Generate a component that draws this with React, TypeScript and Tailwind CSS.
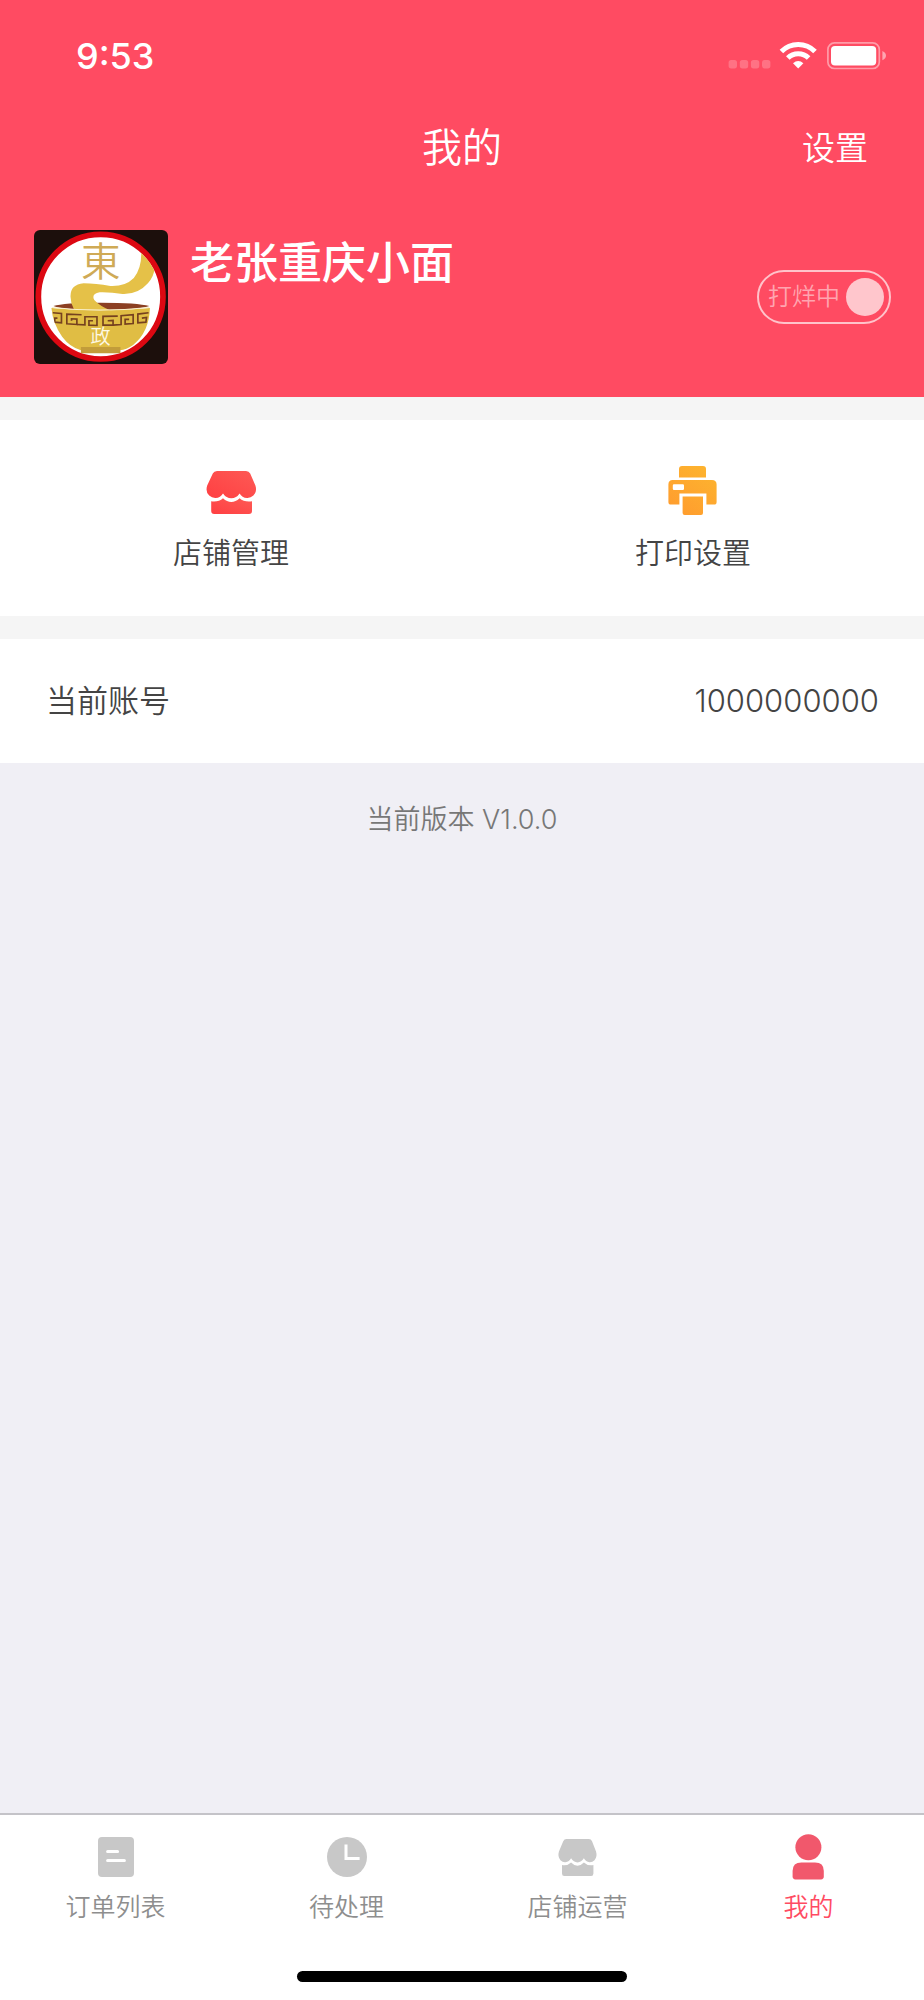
import { useState } from "react";
import type { ReactNode } from "react";

const FONT = "font-['Inter','Noto_Sans_CJK_SC',sans-serif]";

function StatusIcons() {
  return (
    <svg className="h-[28px] w-[158px]" viewBox="0 0 158 28" fill="none" aria-hidden="true">
      <g fill="#fff" fillOpacity="0.22">
        <rect x="0.6" y="18" width="8.4" height="8.4" rx="2.6" />
        <rect x="11.8" y="18" width="8.4" height="8.4" rx="2.6" />
        <rect x="22.9" y="18" width="8.4" height="8.4" rx="2.6" />
        <rect x="34" y="18" width="8.4" height="8.4" rx="2.6" />
      </g>
      <g stroke="#fff" strokeWidth="5">
        <path d="M53.4 9.6 A23.5 23.5 0 0 1 87 9.6" />
        <path d="M59.8 16 A14.6 14.6 0 0 1 80.6 16" />
      </g>
      <path d="M70.2 26.4 L65 21.2 Q70.2 16.8 75.4 21.2 Z" fill="#fff" />
      <rect x="99.9" y="0.9" width="51.4" height="25.6" rx="6.6" stroke="#fff" strokeOpacity="0.45" strokeWidth="1.7" />
      <rect x="103" y="4" width="45.2" height="19.4" rx="4" fill="#fff" />
      <path d="M154.4 9 Q158 10.6 158 13.6 Q158 16.6 154.4 18.2 Z" fill="#fff" fillOpacity="0.5" />
    </svg>
  );
}

function ShopLogo() {
  return (
    <svg
      className="size-[134px] shrink-0 rounded-md"
      viewBox="42 45 400 400"
      role="img"
      aria-label="店铺头像"
    >
      <defs>
        <clipPath id="logo-disc">
          <circle cx="241" cy="244" r="178" />
        </clipPath>
        <clipPath id="logo-bowl">
          <path d="M94 278 Q240 292 388 278 Q386 350 338 388 Q318 402 298 404 L182 404 Q150 396 126 364 Q98 324 94 278 Z" />
        </clipPath>
      </defs>
      <rect x="42" y="45" width="400" height="400" fill="#1c0f0c" />
      <circle cx="241" cy="244" r="186" fill="#fff" stroke="#dc0812" strokeWidth="17" />
      <g clipPath="url(#logo-disc)">
        <path d="M100 272 Q130 262 240 262 Q352 262 386 272 Q352 284 240 284 Q130 284 100 272 Z" fill="#8b3f22" />
        <path
          d="M362 110 Q364 158 340 188 Q314 214 270 212 Q226 204 190 204 Q150 208 151 244 Q151 264 162 284 L272 286 Q238 272 222 254 Q212 236 238 231 Q270 230 306 236 Q352 238 382 204 Q400 184 402 160 L380 110 Z"
          fill="#e5c148"
        />
      </g>
      <path
        d="M94 278 Q240 292 388 278 Q386 350 338 388 Q318 402 298 404 L182 404 Q150 396 126 364 Q98 324 94 278 Z"
        fill="#e0bd44"
      />
      <path d="M96 276 Q240 291 386 276" fill="none" stroke="#faf0cc" strokeWidth="3" />
      <path d="M182 394 L300 394 L300 413 L182 413 Z" fill="#c29c3a" />
      <g clipPath="url(#logo-bowl)" fill="none" stroke="#75411f" strokeWidth="5">
        <path d="M98 292 L124 294 L124 322 L104 320 L104 308 L112 308" />
        <path d="M184 298 L140 296 L140 325 L170 327 L170 311 L154 310 L154 316" />
        <path d="M170 327 L194 328 L194 304 L230 304 L230 330 L206 329 L206 316 L218 316" />
        <path d="M292 302 L248 303 L248 329 L278 329 L278 315 L262 316" />
        <path d="M278 329 L302 327 L302 301 L338 298 L338 324 L314 326 L314 312 L326 312" />
        <path d="M384 292 L352 296 L352 322 L376 320 L378 306 L364 308" />
      </g>
      <text
        x="241"
        y="183"
        textAnchor="middle"
        fontSize="118"
        fontWeight="350"
        fill="#cfaa56"
        className="font-['Noto_Sans_CJK_TC',sans-serif]"
      >
        東
      </text>
      <text
        x="241"
        y="386"
        textAnchor="middle"
        fontSize="60"
        fontWeight="350"
        fill="#fdf8e4"
        className="font-['Noto_Sans_CJK_TC',sans-serif]"
      >
        政
      </text>
    </svg>
  );
}

function StoreShape({ fill }: { fill: string }) {
  return (
    <g fill={fill}>
      <path d="M11 0 H40 Q43 0 44.2 2.6 L49.4 14.6 Q51.4 20.6 47.4 24.6 Q44.6 27.2 41 27 Q36 26.6 33.6 22.4 Q30.4 27.2 25.3 27.2 Q20.2 27.2 17 22.4 Q14.6 26.6 9.6 27 Q6 27.2 3.2 24.6 Q-0.8 20.6 1.2 14.6 L6.8 2.6 Q8 0 11 0 Z" />
      <path d="M5.2 30.2 Q12.6 31.2 17 27.2 Q21 31 25.3 31 Q29.6 31 33.6 27.2 Q38 31.2 46 30.2 V40 Q46 43 43 43 H8.2 Q5.2 43 5.2 40 Z" />
    </g>
  );
}

function StoreIcon() {
  return (
    <svg className="h-[45px] w-[51px]" viewBox="0 -2 51 45" aria-hidden="true">
      <defs>
        <linearGradient id="store-red" x1="0" y1="1" x2="1" y2="0">
          <stop offset="0" stopColor="#ff3f42" />
          <stop offset="1" stopColor="#fd5a55" />
        </linearGradient>
      </defs>
      <StoreShape fill="url(#store-red)" />
    </svg>
  );
}

function PrinterIcon() {
  return (
    <svg className="h-[51px] w-[51px]" viewBox="0 0 51 51" aria-hidden="true">
      <defs>
        <linearGradient id="printer-orange" gradientUnits="userSpaceOnUse" x1="44" y1="0" x2="10" y2="49">
          <stop offset="0" stopColor="#fdb52f" />
          <stop offset="1" stopColor="#ff9c2e" />
        </linearGradient>
      </defs>
      <g fill="url(#printer-orange)">
        <path d="M11 11.4 V3 Q11 0 14 0 H35 Q38 0 38 3 V11.4 Z" />
        <path
          fillRule="evenodd"
          d="M4.6 14 H44 Q48.6 14 48.6 18.6 V36 Q48.6 38.6 46 38.6 H38.4 V27.4 H11.4 V38.6 H3 Q0.4 38.6 0.4 36 V18.6 Q0.4 14 4.6 14 Z M6 18.2 Q4.8 18.2 4.8 19.4 V22.8 Q4.8 24 6 24 H14.8 Q16 24 16 22.8 V19.4 Q16 18.2 14.8 18.2 Z"
        />
        <path d="M14.6 30.6 H35 V47 Q35 49 33 49 H16.6 Q14.6 49 14.6 47 Z" />
      </g>
    </svg>
  );
}

function ListIcon() {
  return (
    <svg className="h-[46px] w-[48px]" viewBox="0 0 48 46" aria-hidden="true">
      <rect x="6" y="3" width="36" height="40" rx="4" fill="#c8c8c8" />
      <path d="M15.6 17.5 H25.6 M15.6 26.4 H32.4" stroke="#fff" strokeWidth="3" strokeLinecap="round" />
    </svg>
  );
}

function ClockIcon() {
  return (
    <svg className="h-[46px] w-[48px]" viewBox="0 0 48 46" aria-hidden="true">
      <circle cx="24" cy="23" r="20" fill="#c8c8c8" />
      <path d="M23 10.6 V24.4 H36.6" fill="none" stroke="#fff" strokeWidth="3" />
    </svg>
  );
}

function StoreTabIcon() {
  return (
    <svg className="h-[46px] w-[48px]" viewBox="0 0 48 46" aria-hidden="true">
      <g transform="translate(4 5) scale(0.77 0.86)">
        <StoreShape fill="#c8c8c8" />
      </g>
    </svg>
  );
}

function UserIcon() {
  return (
    <svg className="h-[46px] w-[48px]" viewBox="0 0 48 46" aria-hidden="true">
      <g fill="#f1586c">
        <circle cx="23.4" cy="13.2" r="13" />
        <path d="M7.6 42.6 V37 Q7.6 28.6 16.4 28.6 H30 Q38.8 28.6 38.8 37 V42.6 Q38.8 45.4 36 45.4 H10.4 Q7.6 45.4 7.6 42.6 Z" />
      </g>
    </svg>
  );
}

function Shortcut({ icon, label }: { icon: ReactNode; label: string }) {
  return (
    <button type="button" className="flex h-full flex-col items-center pt-[46px]">
      <span className="flex h-[51px] items-center">{icon}</span>
      <span className="mt-[17px] text-[29px] leading-10">{label}</span>
    </button>
  );
}

const TABS = [
  { label: "订单列表", icon: <ListIcon />, current: false },
  { label: "待处理", icon: <ClockIcon />, current: false },
  { label: "店铺运营", icon: <StoreTabIcon />, current: false },
  { label: "我的", icon: <UserIcon />, current: true },
];

export default function App() {
  const [resting, setResting] = useState(true);

  return (
    <div className={`flex min-h-screen flex-col bg-[#f0eff5] font-[350] text-[#444] ${FONT}`}>
      <header className="bg-[#ff4b62] text-white">
        <div className="flex h-28 items-center justify-between pr-[38px] pl-[76px]">
          <time className="text-[36px] leading-10 font-medium">9:53</time>
          <StatusIcons />
        </div>
        <div className="grid h-[71px] grid-cols-3 items-center px-14">
          <h1 className="col-start-2 text-center text-[40px] leading-[56px] font-[350]">我的</h1>
          <button type="button" className="justify-self-end text-[33px] leading-[48px]">
            设置
          </button>
        </div>
        <div className="flex items-center pt-[47px] pr-[33px] pb-[33px] pl-[34px]">
          <ShopLogo />
          <h2 className="ml-[22px] flex-1 self-start text-[44px] leading-[66px] font-medium">老张重庆小面</h2>
          <label className="flex h-[54px] w-[134px] cursor-pointer items-center justify-between rounded-full border-2 border-[#ffc3ca] pr-[5px] pl-[9px]">
            <input
              type="checkbox"
              role="switch"
              className="sr-only"
              checked={resting}
              onChange={(e) => setResting(e.target.checked)}
            />
            <span className="text-[24px] leading-8 text-[#ffa5b0]">{resting ? "打烊中" : "营业中"}</span>
            <span className="size-[38px] rounded-full bg-[#ffc6cc]" />
          </label>
        </div>
      </header>

      <main className="flex-1">
        <section className="grid h-[242px] grid-cols-2 border-y-[23px] border-[#f5f5f5] bg-white">
          <Shortcut icon={<StoreIcon />} label="店铺管理" />
          <Shortcut icon={<PrinterIcon />} label="打印设置" />
        </section>
        <dl className="flex h-[124px] items-center justify-between bg-white pr-[45px] pl-[46px] text-[31px] leading-10">
          <dt>当前账号</dt>
          <dd>1000000000</dd>
        </dl>
        <p className="pt-[37px] text-center text-[27px] leading-10 text-[#777]">当前版本 V1.0.0</p>
      </main>

      <footer className="border-t-2 border-[#c4c3c8] bg-white">
        <nav className="grid grid-cols-4 pt-[19px]">
          {TABS.map((tab) => (
            <a
              key={tab.label}
              href="#"
              aria-current={tab.current ? "page" : undefined}
              className={`flex flex-col items-center text-[25px] leading-8 ${
                tab.current ? "text-[#ff4b62]" : "text-[#8e8e8e]"
              }`}
            >
              {tab.icon}
              <span className="mt-[11px]">{tab.label}</span>
            </a>
          ))}
        </nav>
        <div className="mx-auto mt-12 mb-[18px] h-[11px] w-[330px] rounded-full bg-black" />
      </footer>
    </div>
  );
}
